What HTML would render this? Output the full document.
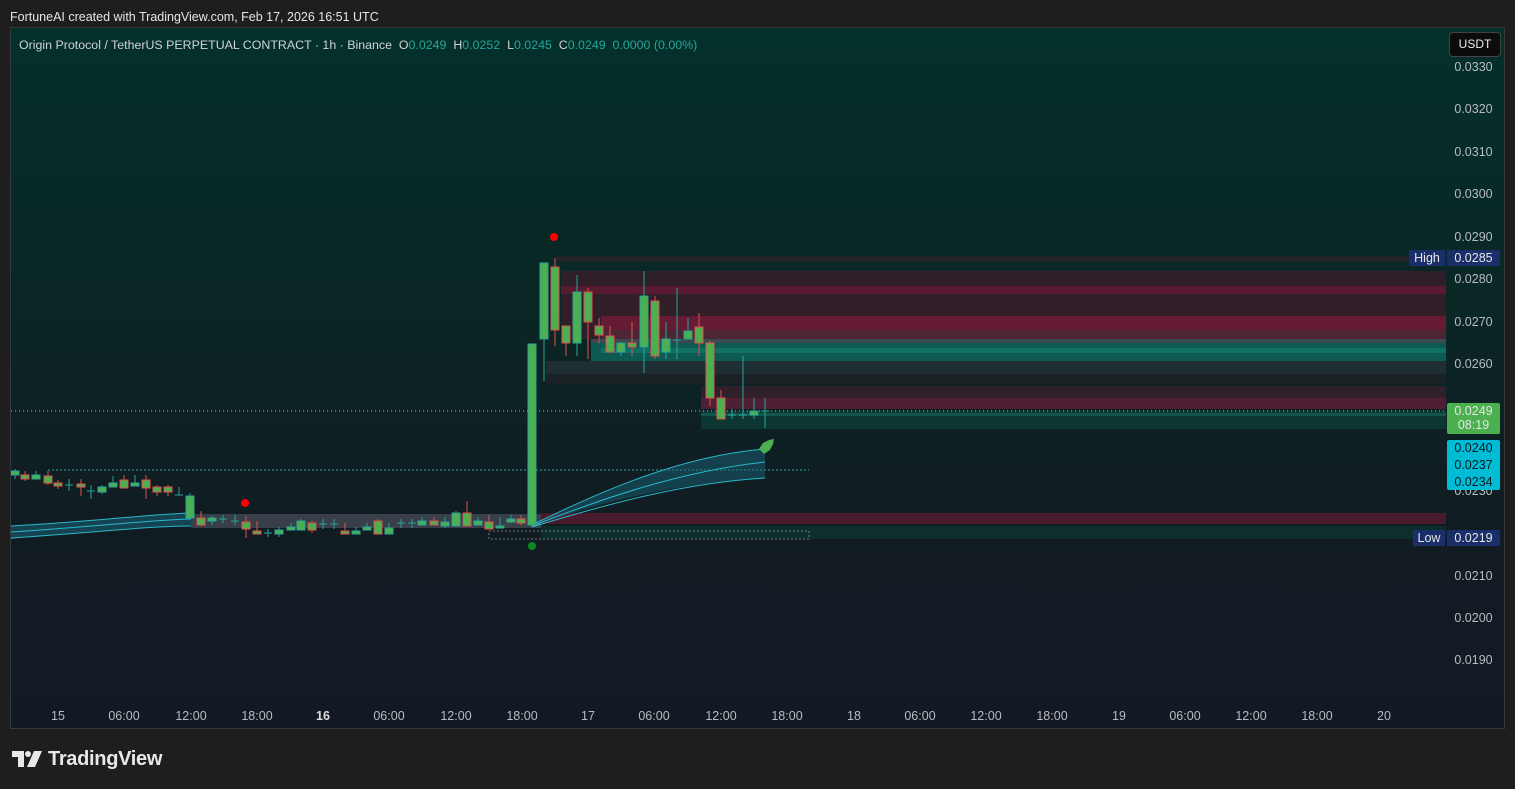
<!DOCTYPE html>
<html><head><meta charset="utf-8"><style>
*{margin:0;padding:0;box-sizing:border-box}
body{width:1515px;height:789px;background:#1e1e1e;font-family:"Liberation Sans",Arial,sans-serif;position:relative;overflow:hidden}
.top{position:absolute;left:10px;top:10px;color:#e6e6e6;font-size:12.5px}
.chart{position:absolute;left:10px;top:27px;width:1495px;height:702px;border:1px solid #363a40;background:linear-gradient(180deg,#04302a 0%,#0a2625 40%,#111c22 70%,#131924 100%);overflow:hidden}
.legend{position:absolute;left:8px;top:10px;font-size:12.4px;color:#cfd3d6;white-space:nowrap}
.legend b{font-weight:normal;color:#26a69a}
.usdt{position:absolute;left:1438px;top:4px;width:52px;height:25px;background:#0c0c0c;border:1px solid #444;border-radius:4px;color:#eee;font-size:12px;text-align:center;line-height:23px}
.pl{position:absolute;left:1436px;font-size:12.5px;color:#b8bcc0;width:53px;text-align:center}
.tl{position:absolute;top:681px;font-size:12.5px;color:#b8bcc0;transform:translateX(-50%)}
.lab{position:absolute;font-size:12.5px;color:#e6e6e6;text-align:center}
.logo{position:absolute;left:12px;top:748px;color:#e8e8e8;font-size:20px;font-weight:bold;letter-spacing:-0.3px}
</style></head><body>
<div class="top">FortuneAI created with TradingView.com, Feb 17, 2026 16:51 UTC</div>
<div class="chart">
<svg width="1495" height="702" style="position:absolute;left:0;top:0">
<g transform="translate(-10,-27)">
<rect x="555" y="255" width="890" height="6" fill="#5a1a30" opacity=".35"/>
<rect x="560" y="270" width="885" height="68" fill="#4a1a2c" opacity=".6"/>
<rect x="560" y="285" width="885" height="8" fill="#6a1a34" opacity=".7"/>
<rect x="600" y="315" width="845" height="14" fill="#7a1a38" opacity=".7"/>
<rect x="600" y="329" width="845" height="9" fill="#5a2a3a" opacity=".7"/>
<rect x="590" y="338" width="855" height="4" fill="#3a4a50"/>
<rect x="590" y="342" width="855" height="18" fill="#0d5a52"/>
<rect x="600" y="347" width="845" height="5" fill="#117064"/>
<rect x="545" y="360" width="900" height="13" fill="#1e2e33"/>
<rect x="545" y="373" width="900" height="10" fill="#1a2226"/>
<rect x="700" y="385" width="745" height="12" fill="#30202a"/>
<rect x="700" y="397" width="745" height="11" fill="#4f1f33"/>
<rect x="700" y="410" width="745" height="18" fill="#0d3632"/>
<rect x="700" y="412" width="745" height="3" fill="#13564e"/>
<rect x="540" y="512" width="905" height="11" fill="#5a1a30" opacity=".75"/>
<rect x="190" y="513" width="350" height="14" fill="#6a6a78" opacity=".45"/>
<rect x="540" y="525" width="905" height="13" fill="#0e2e2b"/>
<rect x="488" y="530" width="320" height="8" fill="none" stroke="#777" stroke-dasharray="2,2"/>
<line x1="10" y1="410" x2="1445" y2="410" stroke="#bbb" stroke-dasharray="1,3"/>
<line x1="47" y1="469" x2="808" y2="469" stroke="#26a69a" stroke-dasharray="2,2"/>
<path d="M10 525 C100 520,150 513,190 512 L190 525 C150 526,100 530,10 538 Z" fill="#1a6a80" opacity=".5"/>
<path d="M10 525 C100 520,150 513,190 512 M10 531 C100 525,150 519,190 518 M10 537 C100 531,150 525,190 525" stroke="#2ab7ca" fill="none" stroke-width="1"/>
<path d="M531 524 C600 490,680 455,764 448 L764 477 C680 482,600 500,531 526 Z" fill="#1a6a80" opacity=".45"/>
<path d="M531 524 C600 490,680 455,764 448 M531 525 C600 498,680 470,764 461 M531 526 C600 505,680 482,764 477" stroke="#2ab7ca" fill="none" stroke-width="1"/>
<g id="c"></g>
<circle cx="553" cy="236" r="4" fill="#ff0000"/>
<circle cx="244" cy="502" r="4" fill="#ff0000"/>
<circle cx="531" cy="545" r="4" fill="#0a8a1e"/>
<path d="M758 448 l4-6 6-3 5-1 -1 5 -3 6 -6 4 z" fill="#4caf50"/>
</g></svg>
<div class="legend">Origin Protocol / TetherUS PERPETUAL CONTRACT · 1h · Binance &nbsp;O<b>0.0249</b> &nbsp;H<b>0.0252</b> &nbsp;L<b>0.0245</b> &nbsp;C<b>0.0249</b> &nbsp;<b>0.0000 (0.00%)</b></div>
<div class="usdt">USDT</div>
<div class="pl" style="top:32px">0.0330</div>
<div class="pl" style="top:74px">0.0320</div>
<div class="pl" style="top:117px">0.0310</div>
<div class="pl" style="top:159px">0.0300</div>
<div class="pl" style="top:202px">0.0290</div>
<div class="pl" style="top:244px">0.0280</div>
<div class="pl" style="top:287px">0.0270</div>
<div class="pl" style="top:329px">0.0260</div>
<div class="pl" style="top:456px">0.0230</div>
<div class="pl" style="top:541px">0.0210</div>
<div class="pl" style="top:583px">0.0200</div>
<div class="pl" style="top:625px">0.0190</div>
<div class="lab" style="left:1398px;top:222px;width:36px;height:16px;background:#1a2f6a;line-height:16px">High</div>
<div class="lab" style="left:1436px;top:222px;width:53px;height:16px;background:#1a2f6a;line-height:16px">0.0285</div>
<div class="lab" style="left:1402px;top:502px;width:32px;height:16px;background:#1a2f6a;line-height:16px">Low</div>
<div class="lab" style="left:1436px;top:502px;width:53px;height:16px;background:#1a2f6a;line-height:16px">0.0219</div>
<div class="lab" style="left:1436px;top:375px;width:53px;height:31px;background:#4caf50;border-radius:2px;line-height:14px;padding-top:1px">0.0249<br>08:19</div>
<div class="lab" style="left:1436px;top:412px;width:53px;height:50px;background:#00bcd4;color:#0a1a22;border-radius:2px;line-height:17px">0.0240<br>0.0237<br>0.0234</div>
<div class="tl" style="left:47px">15</div>
<div class="tl" style="left:113px">06:00</div>
<div class="tl" style="left:180px">12:00</div>
<div class="tl" style="left:246px">18:00</div>
<div class="tl" style="left:312px;font-weight:bold;color:#ddd">16</div>
<div class="tl" style="left:378px">06:00</div>
<div class="tl" style="left:445px">12:00</div>
<div class="tl" style="left:511px">18:00</div>
<div class="tl" style="left:577px">17</div>
<div class="tl" style="left:643px">06:00</div>
<div class="tl" style="left:710px">12:00</div>
<div class="tl" style="left:776px">18:00</div>
<div class="tl" style="left:843px">18</div>
<div class="tl" style="left:909px">06:00</div>
<div class="tl" style="left:975px">12:00</div>
<div class="tl" style="left:1041px">18:00</div>
<div class="tl" style="left:1108px">19</div>
<div class="tl" style="left:1174px">06:00</div>
<div class="tl" style="left:1240px">12:00</div>
<div class="tl" style="left:1306px">18:00</div>
<div class="tl" style="left:1373px">20</div>
</div>
<div class="logo"><span style="display:inline-block;vertical-align:-2px;margin-right:6px">
<svg width="30" height="16" viewBox="0 0 30 16"><path d="M0 0h12v16h-6v-10h-6z" fill="#e8e8e8"/><circle cx="16" cy="3" r="3" fill="#e8e8e8"/><path d="M22 0h8l-7 16h-8z" fill="#e8e8e8"/></svg></span>TradingView</div>
<script>
var d=[[14,470,474,468,478,1],[24,474,478,470,480,0],[35,474,478,470,478,1],[47,475,482,470,484,0],[57,482,485,479,488,0],[68,484,484,478,490,2],[80,483,486,478,495,0],[90,490,490,484,498,2],[101,486,491,484,493,1],[112,482,486,475,486,1],[123,479,487,474,487,0],[134,482,485,474,485,1],[145,479,487,474,498,0],[156,486,491,484,495,0],[167,486,491,484,495,0],[178,494,494,486,494,2],[189,495,517,492,519,1],[200,517,524,510,525,0],[211,517,520,515,524,1],[222,518,518,514,522,2],[234,520,520,514,524,2],[245,521,528,515,537,0],[256,530,533,520,533,0],[267,532,532,528,536,2],[278,529,533,526,536,1],[290,526,529,522,529,1],[300,520,529,518,529,1],[311,522,529,520,532,0],[322,523,523,518,528,2],[333,523,523,518,528,2],[344,530,533,522,533,0],[355,530,533,526,533,1],[366,526,529,522,529,1],[377,520,533,518,533,0],[388,527,533,522,533,1],[400,522,522,518,527,2],[411,522,522,518,527,2],[421,520,524,516,524,1],[433,520,524,516,524,0],[444,521,525,516,527,1],[455,512,525,510,525,1],[466,512,525,500,525,0],[477,520,524,516,524,1],[488,521,528,514,528,0],[499,525,527,516,527,1],[510,518,521,514,522,1],[520,518,522,514,524,0],[531,343,524,343,526,1],
[543,262,338,270,380,1],[554,266,329,257,345,0],[565,325,342,325,355,0],[576,291,342,274,355,1],[587,291,321,287,358,0],[598,325,334,317,342,0],[609,335,351,325,351,0],[620,342,351,342,355,1],[631,342,346,321,355,0],[643,295,346,270,372,1],[654,300,355,295,358,0],[665,338,351,321,358,1],[676,339,339,287,358,2],[687,330,338,317,338,1],[698,326,342,312,355,0],[709,342,397,340,405,0],[720,397,418,389,418,0],[731,414,414,408,418,2],[742,414,414,355,418,2],[753,410,414,397,418,1],[764,410,410,397,427,2]];
var g=document.getElementById('c'),s='';
d.forEach(function(c){var x=c[0],t=Math.min(c[1],c[2]),b=Math.max(c[1],c[2]);
var col=c[5]==0?'#e0514f':'#26a69a';
s+='<line x1="'+x+'" y1="'+c[3]+'" x2="'+x+'" y2="'+c[4]+'" stroke="'+col+'"/>';
if(c[5]==2)s+='<line x1="'+(x-4)+'" y1="'+t+'" x2="'+(x+4)+'" y2="'+t+'" stroke="#26a69a"/>';
else s+='<rect x="'+(x-4)+'" y="'+t+'" width="8" height="'+Math.max(2,b-t)+'" fill="#4caf50" stroke="'+col+'"/>';});
g.innerHTML=s;
</script>
</body></html>
